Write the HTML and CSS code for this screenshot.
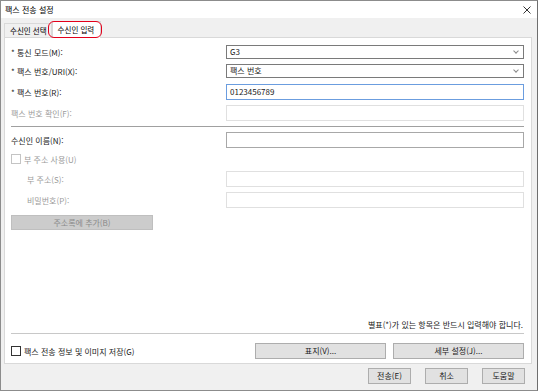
FILE: index.html
```html
<!DOCTYPE html>
<html lang="ko">
<head>
    <meta charset="UTF-8">
    <title>팩스 전송 설정</title>
    <link rel="stylesheet" href="styles.css">
</head>
<body>
<div class="window">
    <div class="titlebar">
        <span class="title">팩스 전송 설정</span>
        <svg class="close" width="8" height="8" viewBox="0 0 8 8">
            <path d="M0.5 0.5 L7.5 7.5 M7.5 0.5 L0.5 7.5" stroke="#333" stroke-width="1" fill="none"/>
        </svg>
    </div>

    <div class="tabs">
        <div class="tab">수신인 선택</div>
        <div class="tab active">수신인 입력</div>
        <div class="mark"></div>
    </div>

    <div class="panel">
        <div class="row row-first">
            <span class="label">* 통신 모드(M):</span>
            <div class="select">G3<span class="chev"></span></div>
        </div>
        <div class="row row-tight">
            <span class="label">* 팩스 번호/URI(X):</span>
            <div class="select">팩스 번호<span class="chev"></span></div>
        </div>
        <div class="row">
            <span class="label">* 팩스 번호(R):</span>
            <div class="field focus">0123456789</div>
        </div>
        <div class="row row-tight">
            <span class="label muted">팩스 번호 확인(F):</span>
            <div class="field off"></div>
        </div>

        <div class="rule"></div>

        <div class="row row-name">
            <span class="label">수신인 이름(N):</span>
            <div class="field"></div>
        </div>
        <div class="check-row muted">
            <span class="box off"></span>부 주소 사용(U)
        </div>
        <div class="row row-sub">
            <span class="label indent muted">부 주소(S):</span>
            <div class="field off"></div>
        </div>
        <div class="row row-tight">
            <span class="label indent muted">비밀번호(P):</span>
            <div class="field off"></div>
        </div>
        <div class="btn disabled add">주소록에 추가(B)</div>

        <div class="spacer"></div>

        <div class="note">별표(*)가 있는 항목은 반드시 입력해야 합니다.</div>
        <div class="rule rule-bottom"></div>
        <div class="bottom-row">
            <div class="check-row save">
                <span class="box"></span>팩스 전송 정보 및 이미지 저장(G)
            </div>
            <div class="btn wide">표지(V)...</div>
            <div class="btn wide">세부 설정(J)...</div>
        </div>
    </div>

    <div class="footer">
        <div class="btn small">전송(E)</div>
        <div class="btn small">취소</div>
        <div class="btn small">도움말</div>
    </div>
</div>
</body>
</html>
```

FILE: styles.css
```css
body {
    margin: 0;
    font-family: "Noto Sans CJK KR", "Noto Sans", sans-serif;
    font-size: 8px;
    color: #1a1a1a;
}

.window {
    width: 538px;
    height: 391px;
    box-sizing: border-box;
    border: 1px solid #8c8c8c;
    border-right-color: #6e6e6e;
    background-color: #f0f0f0;
    display: flex;
    flex-direction: column;
}

.titlebar {
    height: 17px;
    background-color: #ffffff;
    display: flex;
    align-items: center;
    justify-content: space-between;
    padding: 0 6px 0 4px;
    color: #000000;
}

.tabs {
    display: flex;
    align-items: flex-end;
    height: 19px;
    padding-left: 3px;
    position: relative;
    font-size: 7.5px;
    color: #000000;
}

.tab {
    height: 14px;
    line-height: 13px;
    padding: 0 4px 0 5px;
    border: 1px solid #d9d9d9;
    border-bottom: none;
    background-color: #f0f0f0;
    box-sizing: border-box;
}

.tab.active {
    height: 17px;
    line-height: 16px;
    background-color: #ffffff;
    margin-bottom: -1px;
    padding: 0 6px 0 5px;
    position: relative;
    z-index: 1;
}

.mark {
    position: absolute;
    left: 47px;
    top: 3px;
    width: 54px;
    height: 17px;
    box-sizing: border-box;
    border: 1.5px solid #e3001b;
    border-radius: 6px;
    z-index: 2;
}

.panel {
    margin: 0 5px 0 3px;
    height: 327px;
    box-sizing: border-box;
    background-color: #ffffff;
    border: 1px solid #d9d9d9;
    padding: 7px 7px 4px 6px;
    display: flex;
    flex-direction: column;
}

.row {
    display: flex;
    align-items: center;
    justify-content: space-between;
    margin-top: 6px;
}

.row-first {
    margin-top: 0;
}

.row-tight {
    margin-top: 5px;
}

.row-name {
    margin-top: 5px;
}

.row-sub {
    margin-top: 7px;
}

.label {
    white-space: nowrap;
}

.indent {
    padding-left: 16px;
}

.muted {
    color: #9b9b9b;
}

.select,
.field {
    width: 298px;
    box-sizing: border-box;
    background-color: #ffffff;
    padding-left: 3px;
    white-space: nowrap;
}

.select {
    height: 14px;
    line-height: 12px;
    border: 1px solid #7a7a7a;
    position: relative;
}

.chev {
    position: absolute;
    right: 5px;
    top: 3px;
    width: 3px;
    height: 3px;
    border-right: 1px solid #8a8a8a;
    border-bottom: 1px solid #8a8a8a;
    transform: rotate(45deg);
}

.field {
    height: 16px;
    line-height: 14px;
    border: 1px solid #a8a8a8;
}

.field.focus {
    border-color: #6b9ddf;
}

.field.off {
    border-color: #e0e0e0;
}

.rule {
    height: 1px;
    background-color: #a0a0a0;
    margin-top: 5px;
}

.check-row {
    display: flex;
    align-items: center;
    margin-top: 6px;
    height: 10px;
}

.box {
    width: 8px;
    height: 8px;
    border: 1px solid #333333;
    margin-right: 3px;
    background-color: #ffffff;
}

.box.off {
    border-color: #c4c4c4;
}

.btn {
    height: 15px;
    box-sizing: border-box;
    border: 1px solid #adadad;
    background-color: #e1e1e1;
    text-align: center;
    line-height: 13px;
}

.btn.disabled {
    background-color: #cccccc;
    border-color: #bfbfbf;
    color: #8a8a8a;
}

.add {
    width: 142px;
    margin-top: 7px;
}

.spacer {
    flex: 1;
}

.note {
    text-align: right;
    padding-right: 1px;
}

.rule-bottom {
    margin-top: 3px;
    background-color: #c8c8c8;
}

.bottom-row {
    display: flex;
    align-items: center;
    margin-top: 9px;
}

.save {
    margin-top: 0;
    flex: 1;
}

.wide {
    width: 131px;
    height: 16px;
    margin-left: 7px;
}

.footer {
    display: flex;
    justify-content: flex-end;
    gap: 14px;
    padding: 4px 12px 0 0;
}

.small {
    width: 43px;
    height: 16px;
    line-height: 14px;
}
```
